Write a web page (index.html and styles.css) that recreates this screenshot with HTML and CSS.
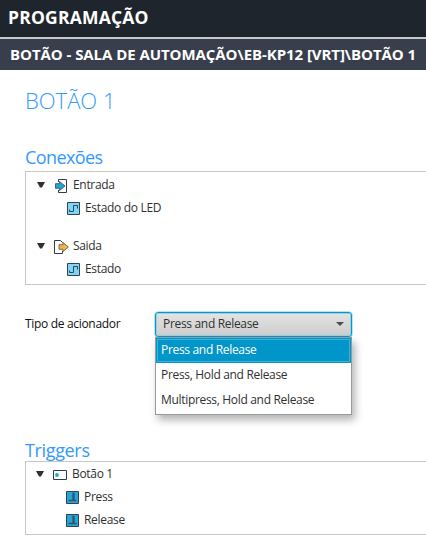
FILE: index.html
```html
<!DOCTYPE html>
<html lang="pt">
<head>
<meta charset="utf-8">
<title>Programação</title>
<link rel="stylesheet" href="styles.css">
</head>
<body>
<svg class="defs" width="0" height="0">
  <symbol id="caret" viewBox="0 0 8 6"><path d="M0 0h8L5 5.5H3z" fill="#303030"/></symbol>
  <symbol id="wave" viewBox="0 0 13 13"><path d="M.5.5h12v12H.5z" fill="#81d4f4" stroke="#2e4354"/><path d="M2.5 7.5v2h4v-6h4v3" fill="none" stroke="#2e4b5d"/></symbol>
  <symbol id="pulse" viewBox="0 0 13 13"><path d="M.5.5h12v12H.5z" fill="#24a5d5" stroke="#2e4354"/><path d="M2.5 9.5h8M7 9.5v-7h1v7" fill="none" stroke="#315568" stroke-width="1.3"/></symbol>
</svg>
<header class="title">PROGRAMAÇÃO</header>
<div class="path"><span>BOTÃO - SALA DE AUTOMAÇÃO\EB-KP12 [VRT]\BOTÃO 1</span></div>
<main>
  <h1>BOTÃO 1</h1>
  <h2 class="connections-title">Conexões</h2>
  <section class="panel connections">
    <div class="row"><svg class="caret"><use href="#caret"/></svg>
      <svg class="icon" viewBox="0 0 14 14"><path d="M4.500 3V.5h8v13h-8V11" fill="#fff" stroke="#303b4e"/><path d="M1.500 4.700h4V2.500L11 7l-5.500 4.500V9.300h-4z" fill="#24a5d5" stroke="#3c5364" stroke-width=".9"/></svg>
      <span>Entrada</span></div>
    <div class="row child"><svg class="box"><use href="#wave"/></svg><span>Estado do LED</span></div>
    <div class="row second"><svg class="caret"><use href="#caret"/></svg>
      <svg class="icon" viewBox="0 0 14 14"><path d="M8.500 3V2.500l-2-2h-6v13h8V11" fill="#fff" stroke="#303b4e"/><path d="M5 4.700h4V2.500L14.400 7 9 11.500V9.300H5z" fill="#fbb33c" stroke="#655f55" stroke-width=".9"/></svg>
      <span>Saida</span></div>
    <div class="row child"><svg class="box"><use href="#wave"/></svg><span>Estado</span></div>
  </section>
  <div class="field">
    <label>Tipo de acionador</label>
    <div class="combo"><span>Press and Release</span><svg width="8" height="4"><path d="M0 0h8L4 4z" fill="#4d4d4d"/></svg>
      <ul class="menu">
        <li class="selected">Press and Release</li>
        <li>Press, Hold and Release</li>
        <li>Multipress, Hold and Release</li>
      </ul>
    </div>
  </div>
  <h2 class="triggers-title">Triggers</h2>
  <section class="panel triggers">
    <div class="row"><svg class="caret"><use href="#caret"/></svg>
      <svg class="icon" viewBox="0 0 14 14"><path d="M.5 2.500h13v9H.5z" fill="#fff" stroke="#303b4e"/><circle cx="4" cy="7" r="1.900" fill="#24a5d5"/></svg>
      <span>Botão 1</span></div>
    <div class="row child"><svg class="box"><use href="#pulse"/></svg><span>Press</span></div>
    <div class="row child"><svg class="box"><use href="#pulse"/></svg><span>Release</span></div>
  </section>
</main>
</body>
</html>
```
FILE: styles.css
```css
* { box-sizing: border-box; }
body { margin: 0; width: 426px; height: 549px; overflow: hidden; background: #fff; color: #303030; font: 12px/18px "Open Sans", "Noto Sans", sans-serif; letter-spacing: -0.32px; white-space: nowrap; }
.defs { display: block; height: 0; }
.title { height: 39px; padding: 5px 0 0 8px; border-bottom: 2px solid #c8c8c8; background: #1e252d; color: #fff; font-size: 17.5px; line-height: 24px; font-weight: 700; letter-spacing: 0.2px; }
.path { height: 31px; padding: 5px 0 0 10px; background: #383e4c; color: #fff; font-size: 15px; line-height: 20px; font-weight: 700; letter-spacing: -0.06px; }
main { padding-left: 25px; }
h1, h2 { margin: 0; color: #3399ff; font-weight: 300; }
h1 { padding-top: 15px; height: 77px; font-size: 22px; line-height: 30px; letter-spacing: 0; }
h2 { height: 24px; font-size: 18px; line-height: 21px; font-weight: 400; letter-spacing: -0.6px; }
.panel { width: 420px; border: 1px solid #c8c8c8; }
.connections { height: 114px; padding: 2px 0 0 11px; }
.row { display: flex; align-items: center; height: 23px; }
.row span { padding-bottom: 2px; }
.row.second { margin-top: 15px; }
.row.child { padding-left: 30px; }
.caret { width: 8px; height: 6px; margin: 0 9px 2px 0; }
.icon { width: 14px; height: 14px; margin-right: 5px; overflow: visible; }
.box { width: 13px; height: 13px; margin-right: 5px; }
.field { display: flex; height: 26px; margin: 26px 0 103px; align-items: center; color: #101010; }
.field label { width: 130px; }
.combo { position: relative; display: flex; align-items: center; justify-content: space-between; width: 197px; height: 25px; padding: 0 7px; border: 1px solid #0796ca; border-radius: 3px; box-shadow: 0 0 0 .5px #7bcbe5, inset 0 0 0 1px #9ad2e4; background: linear-gradient(#e3e3e3, #cdcdcd); color: #303030; }
.menu { position: absolute; z-index: 1; top: 24px; left: -1px; width: 197px; height: 78px; margin: 0; padding: 0; border: 1px solid #969b9e; background: #fff; list-style: none; box-shadow: 3px 5px 8px rgba(0,0,0,.3); }
.menu li { height: 25px; padding-left: 5px; line-height: 24px; }
.menu .selected { color: #fff; background: #0096c9; box-shadow: inset 0 0 0 1px #0096c9, inset 0 0 0 2px #42afd5; }
.triggers-title { height: 21px; letter-spacing: -0.35px; }
.triggers { height: 74px; padding: 1px 0 0 10px; }
```
